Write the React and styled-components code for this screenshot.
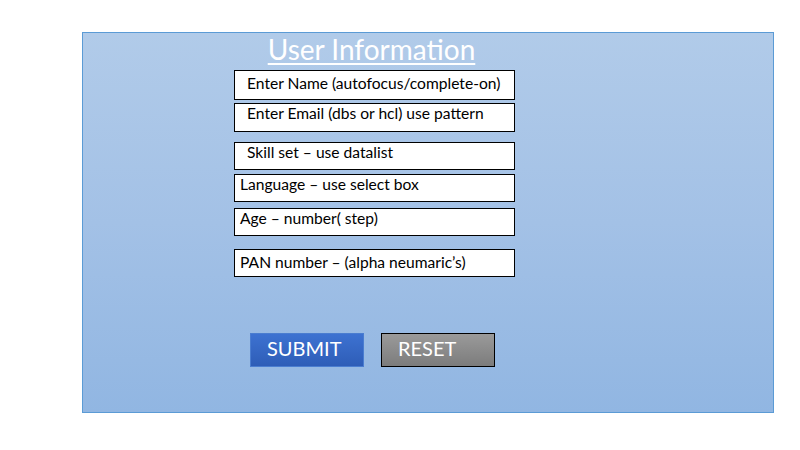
import React from "react";
import styled, { createGlobalStyle } from "styled-components";

const GlobalStyle = createGlobalStyle`
  html, body {
    margin: 0;
    padding: 0;
    background: #ffffff;
  }
  body {
    font-family: "Lato", "Open Sans", sans-serif;
  }
`;

const Page = styled.div`
  width: 800px;
  height: 450px;
  padding: 32px 0 0 82px;
  box-sizing: border-box;
`;

const Panel = styled.div`
  width: 692px;
  height: 381px;
  box-sizing: border-box;
  border: 1px solid #5b9bd5;
  background: linear-gradient(180deg, #b1cbe9 0%, #a3c1e6 50%, #91b6e2 100%);
  padding: 0 0 0 151px;
  display: flex;
  flex-direction: column;
`;

const Title = styled.h1`
  margin: 0;
  width: 275px;
  text-align: center;
  font-family: "Lato", sans-serif;
  font-weight: 400;
  font-size: 28px;
  line-height: 32px;
  color: #ffffff;
  text-decoration: underline;
  text-decoration-thickness: 2px;
  text-underline-offset: 3px;
`;

const Fields = styled.div`
  display: flex;
  flex-direction: column;
  margin-top: 5px;
`;

const Field = styled.div`
  width: 281px;
  height: ${(p) => p.$h}px;
  box-sizing: border-box;
  border: 1px solid #000000;
  background: #ffffff;
  margin-top: ${(p) => p.$gap}px;
  padding: ${(p) => (p.$top ? "0" : "3px")} 0 0 ${(p) => p.$indent}px;
  font-family: "Lato", sans-serif;
  font-size: 15.6px;
  line-height: 19px;
  color: #000000;
  white-space: nowrap;
`;

const Actions = styled.div`
  display: flex;
  gap: 17px;
  margin-top: 56px;
  padding-left: 16px;
`;

const Button = styled.div`
  width: 114px;
  height: 34px;
  box-sizing: border-box;
  border: 1px solid ${(p) => (p.$variant === "reset" ? "#000000" : "#4a7dd0")};
  background: ${(p) =>
    p.$variant === "reset"
      ? "linear-gradient(180deg, #9a9a9a 0%, #7c7c7c 100%)"
      : "linear-gradient(180deg, #3d72d1 0%, #2e5db7 100%)"};
  color: #ffffff;
  font-family: "Lato", sans-serif;
  font-size: 20px;
  line-height: 29px;
  padding-left: 16px;
`;

const fields = [
  { label: "Enter Name (autofocus/complete-on)", indent: 12, gap: 0, h: 30 },
  { label: "Enter Email (dbs or hcl) use pattern", indent: 12, gap: 3, h: 29, top: true },
  { label: "Skill set \u2013 use datalist", indent: 12, gap: 10, h: 28, top: true },
  { label: "Language \u2013 use select box", indent: 5, gap: 4, h: 28, top: true },
  { label: "Age \u2013 number( step)", indent: 5, gap: 6, h: 28, top: true },
  { label: "PAN number \u2013 (alpha neumaric\u2019s)", indent: 5, gap: 13, h: 28 },
];

export default function App() {
  return (
    <>
      <GlobalStyle />
      <Page>
        <Panel>
          <Title>User Information</Title>
          <Fields>
            {fields.map((f) => (
              <Field key={f.label} $indent={f.indent} $gap={f.gap} $h={f.h} $top={f.top}>
                {f.label}
              </Field>
            ))}
          </Fields>
          <Actions>
            <Button>SUBMIT</Button>
            <Button $variant="reset">RESET</Button>
          </Actions>
        </Panel>
      </Page>
    </>
  );
}
